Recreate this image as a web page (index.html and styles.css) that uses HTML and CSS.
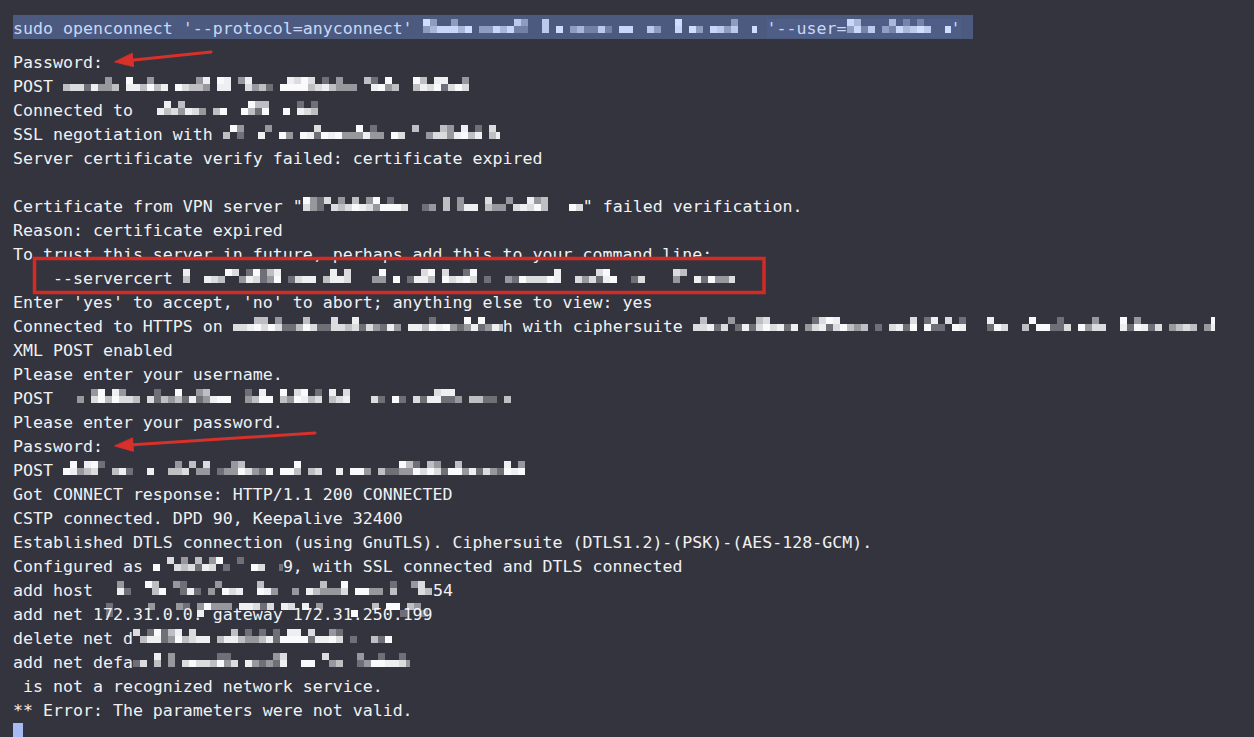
FILE: index.html
```html
<!DOCTYPE html>
<html lang="en">
<head>
  <meta charset="UTF-8" />
  <title>Terminal - openconnect</title>
  <link rel="stylesheet" href="styles.css">
</head>
<body>

<div class="term">
  <div class="cmd"><span class="sel">sudo openconnect '--protocol=anyconnect' <span class="mos lit" data-w="334" data-seed="11"></span> <span class="user">'--user=<span class="mos lit" data-w="104" data-seed="12"></span>'</span></span></div>

  <div class="out">
    <div class="line">Password:</div>
    <div class="line">POST <span class="mos" data-w="422" data-seed="3"></span></div>
    <div class="line">Connected to <span class="mos" data-w="190" data-seed="4"></span></div>
    <div class="line">SSL negotiation with <span class="mos" data-w="277" data-seed="5"></span></div>
    <div class="line">Server certificate verify failed: certificate expired</div>
    <div class="line"> </div>
    <div class="line">Certificate from VPN server "<span class="mos" data-w="280" data-seed="6"></span>" failed verification.</div>
    <div class="line">Reason: certificate expired</div>
    <div class="line">To trust this server in future, perhaps add this to your command line:</div>
    <div class="line">    --servercert <span class="mos" data-w="552" data-seed="7"></span></div>
    <div class="line">Enter 'yes' to accept, 'no' to abort; anything else to view: yes</div>
    <div class="line">Connected to HTTPS on <span class="mos" data-w="270" data-seed="8"></span>h with ciphersuite <span class="mos" data-w="522" data-seed="9"></span></div>
    <div class="line">XML POST enabled</div>
    <div class="line">Please enter your username.</div>
    <div class="line">POST <span class="mos" data-w="457" data-seed="10"></span></div>
    <div class="line">Please enter your password.</div>
    <div class="line">Password:</div>
    <div class="line">POST <span class="mos" data-w="462" data-seed="13"></span></div>
    <div class="line">Got CONNECT response: HTTP/1.1 200 CONNECTED</div>
    <div class="line">CSTP connected. DPD 90, Keepalive 32400</div>
    <div class="line">Established DTLS connection (using GnuTLS). Ciphersuite (DTLS1.2)-(PSK)-(AES-128-GCM).</div>
    <div class="line">Configured as <span class="mos" data-w="130" data-seed="14"></span>9, with SSL connected and DTLS connected</div>
    <div class="line">add host <span class="mos" data-w="330" data-seed="15"></span>54</div>
    <div class="line">add net 1<span class="veiled">72.31.0.0. gateway 172.31.250.199<span class="veil"><span class="mos thin" data-w="330" data-seed="16"></span></span></span></div>
    <div class="line">delete net d<span class="mos" data-w="262" data-seed="17"></span></div>
    <div class="line">add net defa<span class="mos" data-w="277" data-seed="18"></span></div>
    <div class="line"> is not a recognized network service.</div>
    <div class="line">** Error: The parameters were not valid.</div>
    <div class="line"><span class="cursor"></span></div>
  </div>
</div>

<!-- annotations drawn over the screenshot -->
<svg class="marks" width="1254" height="737" viewBox="0 0 1254 737">
  <g fill="#d8302a" stroke="#d8302a" stroke-linecap="round">
    <line x1="129" y1="60.5" x2="211" y2="52" stroke-width="3"/>
    <polygon points="115,62 133.6,66.6 132.2,53.6" stroke-width="1" stroke-linejoin="round"/>
    <line x1="129" y1="445" x2="315" y2="433" stroke-width="3"/>
    <polygon points="115,446 133.4,451.3 132.6,438.3" stroke-width="1" stroke-linejoin="round"/>
  </g>
  <rect x="34.5" y="258.5" width="729.5" height="34" fill="none" stroke="#d42a24" stroke-width="3.5"/>
</svg>

<script src="script.js"></script>
</body>
</html>
```

FILE: styles.css
```css
:root {
  --bg: #34343e;
  --text: #f1f1f3;
  --sel-bg: #4c5a80;
  --sel-text: #c9d8f7;
  --cursor: #a7baf2;
}
html, body {
  margin: 0;
  height: 100%;
  overflow: hidden;
}
body {
  position: relative;
  background: var(--bg);
  color: var(--text);
  font-family: "DejaVu Sans Mono", "Liberation Mono", monospace;
  font-size: 16.6px;
  line-height: 24px;
}
.term {
  padding: 15px 0 0 13px;
}
.cmd {
  height: 24px;
  margin-bottom: 10px;
  white-space: pre;
}
.sel {
  display: inline-block;
  box-sizing: border-box;
  width: 960px;
  height: 24px;
  padding-top: 2px;
  background: var(--sel-bg);
  color: var(--sel-text);
}
.user {
  background: #4f5e86;
}
.line {
  box-sizing: border-box;
  height: 24px;
  padding-top: 2px;
  white-space: pre;
}
.mos {
  display: inline-grid;
  grid-template-rows: 7px 7px;
  grid-auto-flow: column;
  grid-auto-columns: 7px;
  box-sizing: border-box;
  height: 22px;
  padding-top: 2px;
  vertical-align: top;
  overflow: hidden;
}
.mos i {
  display: block;
}
.veiled {
  position: relative;
}
.veil {
  position: absolute;
  left: -4px;
  top: -4px;
  height: 22px;
}
.cursor {
  display: inline-block;
  width: 10px;
  height: 24px;
  vertical-align: top;
  background: var(--cursor);
}
.marks {
  position: absolute;
  left: 0;
  top: 0;
  pointer-events: none;
}
```

FILE: script.js
```js
// fills every .mos span with a blocky "pixelated" pattern
function rng(seed) {
  let s = seed * 9301 + 49297;
  return function () {
    s = (s * 9301 + 49297) % 233280;
    return s / 233280;
  };
}

const shades = [1, 0.95, 0.85, 0.7, 0.5, 0.3];

document.querySelectorAll('.mos').forEach(function (el) {
  const w = parseInt(el.dataset.w, 10);
  const rand = rng(parseInt(el.dataset.seed, 10));
  const lit = el.classList.contains('lit');
  const thin = el.classList.contains('thin');
  const cols = Math.round(w / 7);
  const color = lit ? '207,222,255' : '250,250,252';
  el.style.width = w + 'px';

  let gap = 0;
  for (let c = 0; c < cols; c++) {
    // short word gaps now and then
    if (gap > 0) { gap--; }
    else if (rand() < 0.1) { gap = 1 + Math.floor(rand() * 2); }
    for (let r = 0; r < 2; r++) {
      const cell = document.createElement('i');
      const chance = r === 0 ? (thin ? 0.6 : 0.35) : (thin ? 0.15 : 0.85);
      if (gap === 0 && rand() < chance) {
        const a = shades[Math.floor(rand() * shades.length)];
        cell.style.background = 'rgba(' + color + ',' + a + ')';
      }
      el.appendChild(cell);
    }
  }
});
```
